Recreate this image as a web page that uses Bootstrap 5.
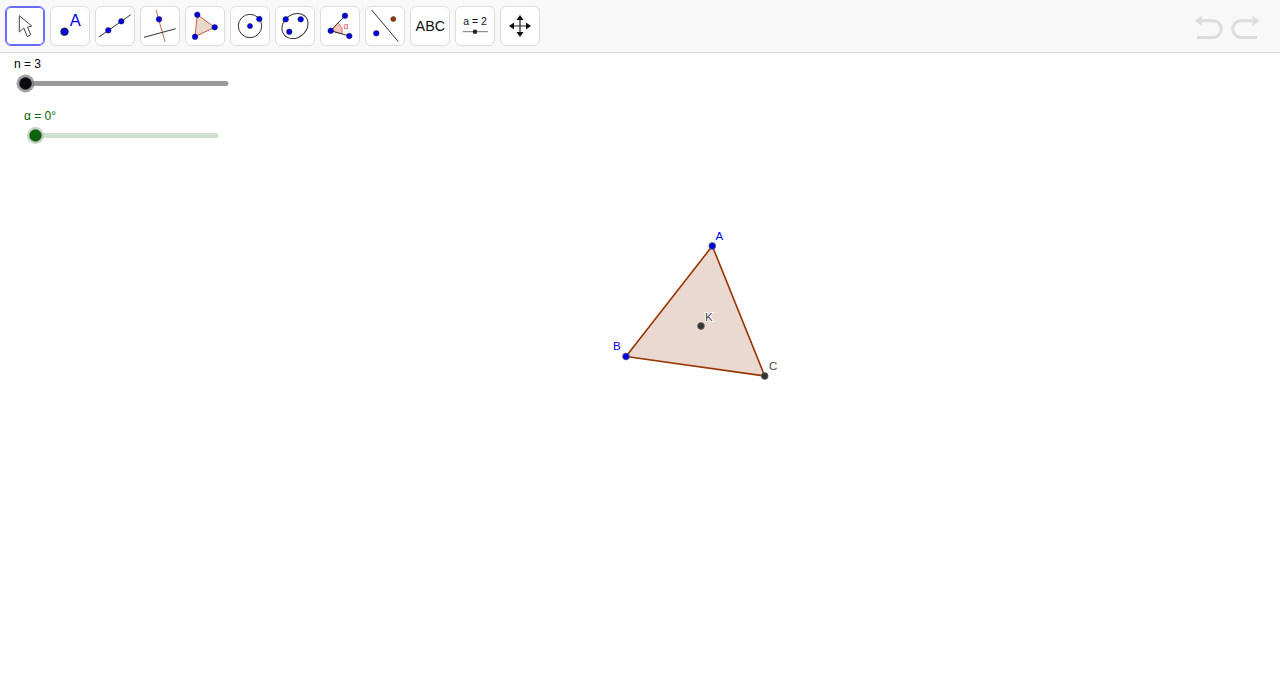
<!DOCTYPE html>
<html lang="en">
<head>
<meta charset="utf-8">
<title>GeoGebra</title>
<link href="https://cdn.jsdelivr.net/npm/bootstrap@5.3.0/dist/css/bootstrap.min.css" rel="stylesheet">
<style>
html,body{height:100%;overflow:hidden;background:#fff;font-family:"Liberation Sans",Arial,sans-serif}
.gg-bar{height:53px;background:#f8f8f8;border-bottom:1px solid #dcdcdc;padding:6px 15px 0 5px;gap:5px}
.gg-tool{width:40px;height:40px;padding:0;background:#fff;border:1px solid #dedede;border-radius:6px;line-height:0}
.gg-tool svg{display:block}
.gg-active,.gg-active:hover{border:1px solid #6a6cf8;box-shadow:inset 0 0 0 1px #6a6cf8;border-radius:6px}
.gg-canvas{display:block;width:1280px;height:623px}
.gg-canvas text,.gg-tool text{font-family:"Liberation Sans",Arial,sans-serif}
.gg-halo{paint-order:stroke;stroke:#fff;stroke-width:2px}
.gg-undo{margin-top:2px}
</style>
</head>
<body>
<div class="gg-bar d-flex align-items-start">
  <button class="btn gg-tool gg-active" aria-label="Move"><svg width="38" height="38" viewBox="6 7 38 38"><path d="M19.3 15.7V32L23.8 28 27.2 36.6 30.7 34.8 27.6 27.2 31.7 26Z" fill="#fff" stroke="#444" stroke-width="1"/></svg></button>
  <button class="btn gg-tool" aria-label="Point"><svg width="38" height="38" viewBox="51 7 38 38"><circle cx="64.5" cy="31.7" r="3.8" fill="#0a0ad8" stroke="#222" stroke-width=".8"/><text x="69.8" y="25.8" font-size="16.5" fill="#0000e6">A</text></svg></button>
  <button class="btn gg-tool" aria-label="Line"><svg width="38" height="38" viewBox="96 7 38 38"><path d="M99 37 130.7 14.7" stroke="#333" stroke-width="1"/><circle cx="108.3" cy="30.3" r="2.8" fill="#0000e6" stroke="#223" stroke-width=".5"/><circle cx="121.3" cy="21.3" r="2.8" fill="#0000e6" stroke="#223" stroke-width=".5"/></svg></button>
  <button class="btn gg-tool" aria-label="Perpendicular"><svg width="38" height="38" viewBox="141 7 38 38"><path d="M156 10 165 41.7" stroke="#c8644a" stroke-width="1"/><path d="M144 37.3 175.7 28.7" stroke="#333" stroke-width="1"/><circle cx="159" cy="19.3" r="2.8" fill="#0000e6" stroke="#223" stroke-width=".5"/></svg></button>
  <button class="btn gg-tool" aria-label="Polygon"><svg width="38" height="38" viewBox="186 7 38 38"><path d="M197.3 14.7 214.7 27.3 195 36.7Z" fill="#edd8d0" stroke="#c0623f" stroke-width="1"/><circle cx="197.3" cy="14.7" r="2.8" fill="#0000e6" stroke="#223" stroke-width=".5"/><circle cx="214.7" cy="27.3" r="2.8" fill="#0000e6" stroke="#223" stroke-width=".5"/><circle cx="195" cy="36.7" r="2.8" fill="#0000e6" stroke="#223" stroke-width=".5"/></svg></button>
  <button class="btn gg-tool" aria-label="Circle"><svg width="38" height="38" viewBox="231 7 38 38"><circle cx="250" cy="26" r="11.7" fill="none" stroke="#333" stroke-width="1"/><circle cx="250" cy="26" r="2.6" fill="#0000e6" stroke="#223" stroke-width=".5"/><circle cx="259.3" cy="19" r="2.8" fill="#0000e6" stroke="#223" stroke-width=".5"/></svg></button>
  <button class="btn gg-tool" aria-label="Ellipse"><svg width="38" height="38" viewBox="276 7 38 38"><ellipse cx="295" cy="26" rx="14" ry="11.5" transform="rotate(-40 295 26)" fill="none" stroke="#333" stroke-width="1"/><circle cx="285.7" cy="19.3" r="2.8" fill="#0000e6" stroke="#223" stroke-width=".5"/><circle cx="300.7" cy="19.3" r="2.8" fill="#0000e6" stroke="#223" stroke-width=".5"/><circle cx="289.3" cy="31.7" r="2.8" fill="#0000e6" stroke="#223" stroke-width=".5"/></svg></button>
  <button class="btn gg-tool" aria-label="Angle"><svg width="38" height="38" viewBox="321 7 38 38"><path d="M330.7 30.7 337.8 22.9A11 11 0 0 1 342 34Z" fill="#f7c4c0" stroke="#d0574a" stroke-width=".8"/><path d="M330.7 30.7 345 15.7M330.7 30.7 349.3 36" stroke="#333" stroke-width="1"/><circle cx="330.7" cy="30.7" r="2.8" fill="#0000e6" stroke="#223" stroke-width=".5"/><circle cx="345" cy="15.7" r="2.8" fill="#0000e6" stroke="#223" stroke-width=".5"/><circle cx="349.3" cy="36" r="2.8" fill="#0000e6" stroke="#223" stroke-width=".5"/><text x="343.5" y="29" font-size="8.5" fill="#d0574a">α</text></svg></button>
  <button class="btn gg-tool" aria-label="Reflect"><svg width="38" height="38" viewBox="366 7 38 38"><path d="M371.7 10 398.3 41.7" stroke="#333" stroke-width="1"/><circle cx="376.3" cy="33.3" r="2.8" fill="#0000e6" stroke="#223" stroke-width=".5"/><circle cx="393.3" cy="19" r="2.5" fill="#993300" stroke="#333" stroke-width=".5"/></svg></button>
  <button class="btn gg-tool" aria-label="Text"><svg width="38" height="38" viewBox="411 7 38 38"><text x="430.3" y="31" font-size="14.3" text-anchor="middle" fill="#111">ABC</text></svg></button>
  <button class="btn gg-tool" aria-label="Slider"><svg width="38" height="38" viewBox="456 7 38 38"><text x="475" y="25" font-size="10.5" text-anchor="middle" fill="#111" xml:space="preserve">a = 2</text><path d="M462.7 31.7H488" stroke="#777" stroke-width="1"/><circle cx="475" cy="31.7" r="2.2" fill="#222"/></svg></button>
  <button class="btn gg-tool" aria-label="Move view"><svg width="38" height="38" viewBox="501 7 38 38"><path d="M520 18V34M512 26H528" stroke="#222" stroke-width="1.2"/><path d="M520 15 523.5 20H516.5ZM520 37 516.5 32H523.5ZM509 26 514 22.5V29.5ZM531 26 526 29.5V22.5Z" fill="#111"/></svg></button>
  <svg class="gg-undo ms-auto" width="70" height="36" viewBox="1195 8 70 36" aria-label="Undo and redo">
    <g fill="none" stroke="#dcdcdc" stroke-width="3"><path d="M1200 20.7H1214A8.5 8.5 0 0 1 1214 37.5H1197"/><path d="M1254 20.7H1240A8.5 8.5 0 0 0 1240 37.5H1257"/></g>
    <path d="M1195 20.7 1202 15.7V25.7ZM1259.5 20.7 1252.5 25.7V15.7Z" fill="#dcdcdc"/>
  </svg>
</div>
<svg class="gg-canvas" viewBox="0 53 1280 623">
  <text x="14" y="68" font-size="12" fill="#000">n = 3</text>
  <path d="M25 83.5H226" stroke="#9a9a9a" stroke-width="5" stroke-linecap="round"/>
  <circle cx="25.5" cy="83.5" r="9" fill="#808080" fill-opacity=".75"/>
  <circle cx="25.5" cy="83.5" r="6" fill="#0b0b12" stroke="#222" stroke-width=".5"/>
  <text x="24" y="120" font-size="12" fill="#006400">α = 0°</text>
  <path d="M36 135.5H216" stroke="#cfe0cf" stroke-width="5" stroke-linecap="round"/>
  <circle cx="35.5" cy="135.5" r="8.5" fill="#b3c9b3" fill-opacity=".8"/>
  <circle cx="35.5" cy="135.5" r="5.8" fill="#0a640a" stroke="#1d3a1d" stroke-width=".6"/>

  <path d="M712.3 246 764.7 376 626 356.5Z" fill="#ead9d1" stroke="#993300" stroke-width="1.6" stroke-linejoin="round"/>
  <circle cx="712.3" cy="246" r="3.4" fill="#0000e6" stroke="#666" stroke-width=".8"/>
  <circle cx="626" cy="356.5" r="3.4" fill="#0000e6" stroke="#666" stroke-width=".8"/>
  <circle cx="764.7" cy="376" r="3.4" fill="#333" stroke="#666" stroke-width=".8"/>
  <circle cx="701" cy="326" r="3.4" fill="#333" stroke="#666" stroke-width=".8"/>
  <text x="715.5" y="240" font-size="11.5" fill="#0000e6">A</text>
  <text x="613" y="350" font-size="11.5" fill="#0000e6">B</text>
  <text x="769" y="370" font-size="11.5" fill="#444">C</text>
  <text class="gg-halo" x="705" y="321" font-size="11.5" fill="#444">K</text>
</svg>
<script src="https://cdn.jsdelivr.net/npm/bootstrap@5.3.0/dist/js/bootstrap.bundle.min.js"></script>
</body>
</html>
